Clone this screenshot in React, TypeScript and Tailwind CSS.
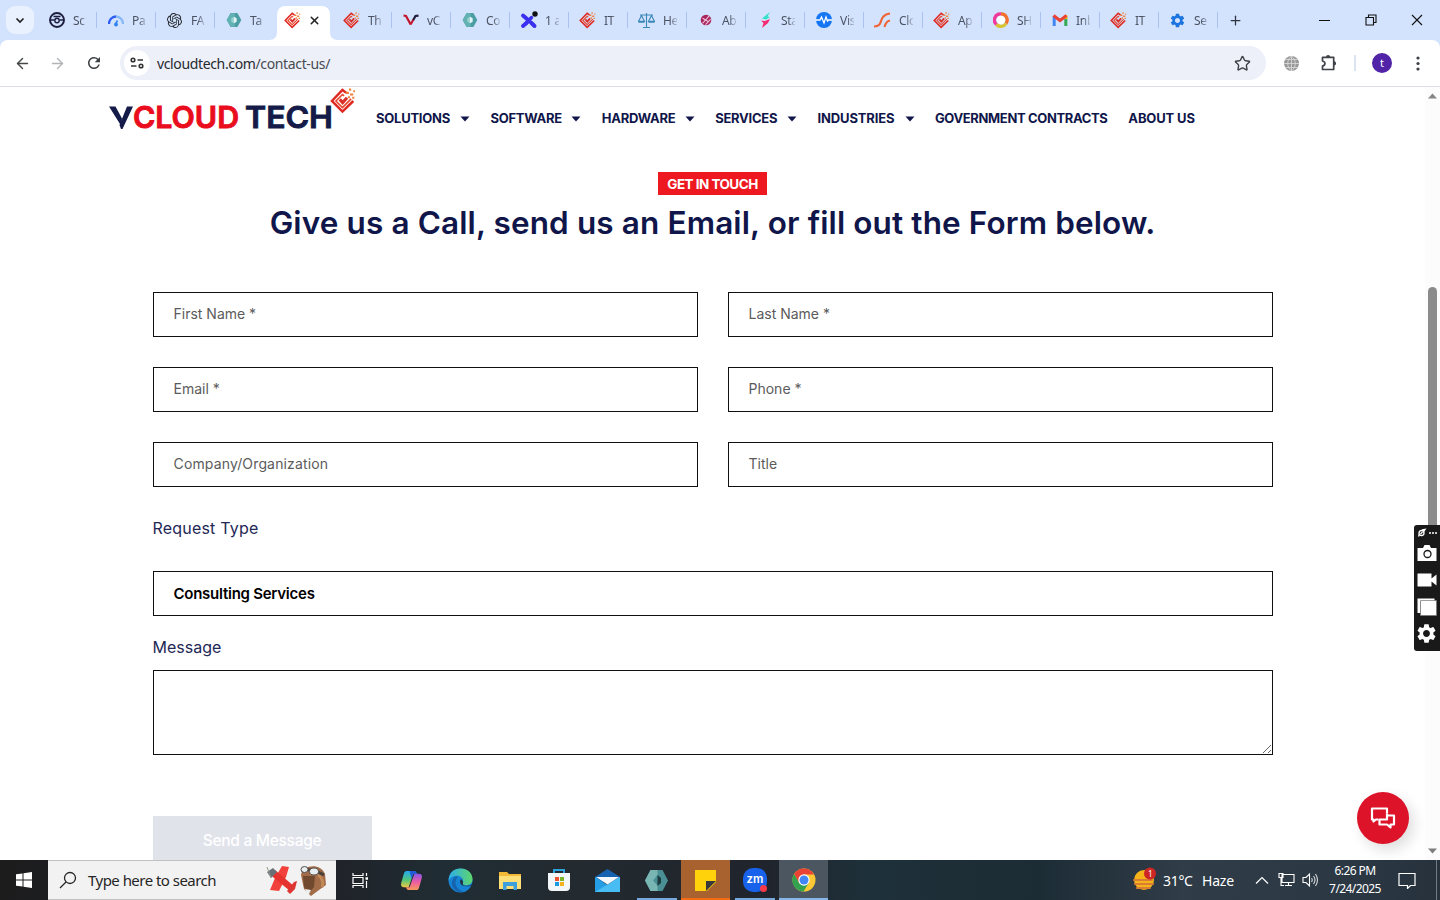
import React from "react";
import { ArrowLeft, ArrowRight, Star, X, Plus, Search } from "lucide-react";
import { SiOpenai } from "react-icons/si";
import { MdSettings, MdRefresh } from "react-icons/md";

const Mark = ({ s = 18 }: { s?: number }) => (
  <svg width={s} height={s} viewBox="0 0 24 24" fill="none" className="shrink-0">
    <path d="M15 4.500 11.500 1.800 1.800 12 11.500 21.800 21.500 12" stroke="#df2a24" strokeWidth="2.300" />
    <path d="M13 7.300 11.500 6 5.500 12 11.500 18 19.500 10" stroke="#e9452c" strokeWidth="1.500" />
    <path d="m9 10.500 2.700 3 4-4.500" stroke="#d9302a" strokeWidth="2.800" />
    <path d="M14.500 4.500h3M17.500 1.500h2M18.500 6h3M16.500 8.500h2M20.500 9h2M21.500 3h1.500" stroke="#f0813c" strokeWidth="2" />
  </svg>
);

const Hexagon = ({ s = 16 }: { s?: number }) => (
  <svg width={s} height={s} viewBox="0 0 24 24">
    <path d="M7 1.500h10l6 10.500-6 10.500H7L1 12Z" fill="#4b9da4" />
    <path d="M7 1.500h6v21H7L1 12Z" fill="#62b2b4" />
    <path d="m12 7 4 2.500v5L12 17Z" fill="#e3f5f4" />
    <path d="m12 7-4 2.500v5L12 17Z" fill="#9bd3d2" />
  </svg>
);

const icons: Record<string, React.ReactNode> = {
  scan: (
    <svg width="16" height="16" viewBox="0 0 16 16" fill="none" stroke="#1c1d3f">
      <circle cx="8" cy="8" r="7" strokeWidth="1.900" />
      <circle cx="8" cy="8.500" r="2.200" strokeWidth="1.400" />
      <path d="M2 8h3.500M10.500 8H14M4.500 4.500h7" strokeWidth="1.400" />
    </svg>
  ),
  gauge: (
    <svg width="16" height="16" viewBox="0 0 16 16" fill="none" strokeWidth="2.300">
      <path d="M1 12a7.200 7.200 0 0 1 7-7.500" stroke="#2f5ff2" />
      <path d="M8 4.500a7.200 7.200 0 0 1 7 7.500" stroke="#86b9f9" />
      <path d="m7.500 12 2-3.500" stroke="#2f83f6" strokeWidth="1.600" />
      <circle cx="8" cy="12.500" r="1.900" fill="#2f83f6" />
    </svg>
  ),
  ai: <SiOpenai size={15} color="#25292e" />,
  hex: <Hexagon />,
  mark: <Mark s={17} />,
  vee: (
    <svg width="16" height="16" viewBox="0 0 16 16" fill="none" strokeWidth="2.200">
      <path d="M.5 3.500 3 4l4.700 8.500" stroke="#c3152b" />
      <path d="m7.500 12.500 3-5" stroke="#c3152b" />
      <path d="m10.200 8 2.300-4 3-.3" stroke="#201b38" />
    </svg>
  ),
  ex: (
    <svg width="18" height="18" viewBox="0 0 18 18" fill="none" strokeLinecap="round" className="shrink-0">
      <path d="m3 4.500 4 3.500M3 15l4-3.500M11.500 12l3 3" stroke="#3a30ee" strokeWidth="3.900" />
      <path d="m6 7 6 5.500M6 12.500l5.500-6" stroke="#3a30ee" strokeWidth="3.400" />
      <circle cx="15" cy="3" r="2.700" fill="#111" />
    </svg>
  ),
  scale: (
    <svg width="17" height="17" viewBox="0 0 17 17" fill="none" stroke="#3a88b8" strokeWidth="1.100" className="shrink-0">
      <path d="M8.500 1v14M2 3h13M5 15.500h7M3.500 3.500l-3 6h6Zm10 0-3 6h6Z" />
      <path d="M.5 9.700h6M10.500 9.700h6" strokeWidth="2" />
    </svg>
  ),
  globe: (
    <svg width="12" height="12" viewBox="0 0 14 14">
      <circle cx="7" cy="7" r="6.200" fill="#a9265c" />
      <path d="m3 11 8-9M6.500 12.500l6-6.500M3 5l7 4" stroke="#efc4dd" strokeWidth="1.200" />
    </svg>
  ),
  bolt: (
    <svg width="16" height="16" viewBox="0 0 16 16">
      <path d="M13 0 5 6.500 9 7.500 13 5 10.500 4.500Z" fill="#31e1c7" />
      <path d="M4 8.500 8 9 13 7l-2 4-6 5 1.500-5Z" fill="#f52a70" />
    </svg>
  ),
  pulse: (
    <svg width="16" height="16" viewBox="0 0 16 16">
      <circle cx="8" cy="8" r="8" fill="#1476f2" />
      <path d="M0 8h4l1.500-3L8 11l2-6 1.500 4 1-1H16" fill="none" stroke="#fff" strokeWidth="1.300" />
    </svg>
  ),
  swoosh: (
    <svg width="17" height="17" viewBox="0 0 17 17" fill="none" stroke="#ef6335" strokeWidth="2.100" className="shrink-0">
      <path d="M0 14.500c8 0 6-6.500 9-9.500 2-2.500 3.500-3 7-3.500M10.500 15c1-4 2.500-6 5.500-6.500" />
    </svg>
  ),
  ring: (
    <svg width="16" height="16" viewBox="0 0 16 16" fill="none" strokeWidth="3.300">
      <path d="M3.500 12.500A6 6 0 0 1 8 2" stroke="#ee3a9b" />
      <path d="M8 2a6 6 0 0 1 5 9.500" stroke="#f3702f" />
      <path d="M13 11.500a6 6 0 0 1-9.500 1" stroke="#d8c431" />
      <circle cx="8" cy="8" r="4.200" fill="#fff" stroke="none" />
    </svg>
  ),
  mail: (
    <svg width="16" height="16" viewBox="0 0 16 16" fill="none" strokeWidth="3">
      <path d="M2.200 4v10" stroke="#4285f4" />
      <path d="M13.800 5v9" stroke="#34a853" />
      <path d="M13.800 3v4" stroke="#fbbc04" />
      <path d="M1.500 3.500 8 8.500l6.500-5" stroke="#ea4335" />
    </svg>
  ),
  gear: <MdSettings size={17} color="#1b74df" className="shrink-0" />,
};

const tabs: [string, string][] = [
  ["scan", "Sc"], ["gauge", "Pa"], ["ai", "FA"], ["hex", "Ta"], ["active", ""], ["mark", "Th"],
  ["vee", "vC"], ["hex", "Co"], ["ex", "1 a"], ["mark", "IT"], ["scale", "He"], ["globe", "Ab"],
  ["bolt", "Sta"], ["pulse", "Vis"], ["swoosh", "Clo"], ["mark", "Ap"], ["ring", "SH"],
  ["mail", "Inb"], ["mark", "IT"], ["gear", "Se"],
];

function TabStrip() {
  return (
    <div className="flex h-10 shrink-0 items-center bg-[#d3e2fd]">
      <div className="ml-1.5 mr-[5px] flex h-7 w-7 shrink-0 items-center justify-center rounded-[9px] bg-[#eaf1fe]">
        <svg width="10" height="7" viewBox="0 0 10 7" fill="none" stroke="#222" strokeWidth="1.700"><path d="m1.500 1.500 3.500 3.500 3.500-3.500" /></svg>
      </div>
      {tabs.map(([icon, label], i) =>
        icon === "active" ? (
          <div key={i} className="relative flex h-full w-[59px] shrink-0 items-end">
            <svg width="59" height="34" viewBox="0 0 59 34" className="absolute bottom-0 left-0 overflow-visible" fill="#fff">
              <path d="M-6 34Q2 34 2 26V9Q2 0 11 0H46Q55 0 55 9V26Q55 34 63 34Z" />
            </svg>
            <div className="relative flex h-[34px] w-full items-center pb-1.5 pl-[9px]">
              <Mark s={17} />
              <X size={13} strokeWidth={2.800} color="#222" className="ml-[7px]" />
            </div>
          </div>
        ) : (
          <div key={i} className="flex h-10 w-[59px] shrink-0 items-center pl-[9px]">
            <div className="flex w-[17px] shrink-0 items-center justify-center">{icons[icon]}</div>
            <div className="ml-[8px] w-[14px] overflow-hidden whitespace-nowrap pt-px text-[12px] leading-4 tracking-[-0.300px] text-[#4b5362] [mask-image:linear-gradient(to_right,#000_50%,#0003)]">{label}</div>
            <div className={i === 3 ? "hidden" : "ml-auto mr-px h-4 w-px bg-[#a9c2ef]"} />
          </div>
        ),
      )}
      <Plus size={15} strokeWidth={2} color="#303440" className="ml-[9px] shrink-0" />
      <svg width="11" height="11" viewBox="0 0 11 11" stroke="#111" className="ml-auto shrink-0"><path d="M0 5.500h11" /></svg>
      <svg width="12" height="12" viewBox="0 0 12 12" fill="none" stroke="#111" strokeWidth="1.100" className="ml-[35px] shrink-0">
        <path d="M1 3.500h7.500V11H1ZM3.500 3.500V1H11v7.500H8.500" />
      </svg>
      <svg width="12" height="12" viewBox="0 0 12 12" stroke="#111" strokeWidth="1.100" className="ml-[34px] mr-[17px] shrink-0"><path d="m1 1 10 10M11 1 1 11" /></svg>
    </div>
  );
}

function Toolbar() {
  return (
    <div className="flex h-[47px] shrink-0 items-center rounded-t-[8px] border-b border-[#dcdfe3] bg-white">
      <ArrowLeft size={17} strokeWidth={2} color="#444746" className="ml-[14px]" />
      <ArrowRight size={17} strokeWidth={2} color="#b2b4b6" className="ml-[18px]" />
      <MdRefresh size={18} color="#3d4043" className="ml-[19px]" />
      <div className="ml-[17px] flex h-[34px] w-[1146px] items-center rounded-full bg-[#edf0f9] pl-[4px]">
        <div className="flex h-[26px] w-[26px] items-center justify-center rounded-full bg-white">
          <svg width="14" height="12" viewBox="0 0 14 12" fill="none" stroke="#333" strokeWidth="1.600">
            <circle cx="3" cy="3" r="1.800" /><path d="M7.500 3H13M1 9h5.500" /><circle cx="11" cy="9" r="1.800" />
          </svg>
        </div>
        <span className="ml-[7px] text-[14px] tracking-[-0.360px] text-[#27292d]">vcloudtech.com<span className="text-[#474b52]">/contact-us/</span></span>
        <Star size={17} strokeWidth={2} color="#3f4247" className="ml-auto mr-[15px]" />
      </div>
      <svg width="17" height="17" viewBox="0 0 17 17" className="ml-[17px]">
        <circle cx="8.500" cy="8.500" r="7.500" fill="#999" />
        <path d="M1 8.500h15M2.500 4.500h12M2.500 12.500h12M8.500 1v15M8.500 1c-5 4-5 11 0 15M8.500 1c5 4 5 11 0 15" fill="none" stroke="#dedede" strokeWidth=".8" />
      </svg>
      <svg width="18" height="18" viewBox="0 0 18 18" className="ml-[20px]">
        <path d="M2.500 3.300h11.200v12.200H2.500V12q2.400-.5 2.400-2.500T2.500 7Z" fill="none" stroke="#3f4247" strokeWidth="1.700" strokeLinejoin="round" />
        <path d="M6 3a2 2 0 0 1 4.200 0ZM14 7.300a2 2 0 0 1 0 4.200Z" fill="#3f4247" />
      </svg>
      <div className="ml-[16px] h-4 w-0.5 bg-[#dce3f2]" />
      <div className="ml-[16px] flex h-5 w-5 items-center justify-center rounded-full bg-[#5123a7] text-[11px] text-white">t</div>
      <svg width="4" height="15" viewBox="0 0 4 15" className="ml-[24px]" fill="#3c3f43"><circle cx="2" cy="2" r="1.600" /><circle cx="2" cy="7.500" r="1.600" /><circle cx="2" cy="13" r="1.600" /></svg>
    </div>
  );
}

const nav = [
  { t: "SOLUTIONS", w: "w-[94px]", c: true }, { t: "SOFTWARE", w: "w-[91px]", c: true },
  { t: "HARDWARE", w: "w-[93px]", c: true }, { t: "SERVICES", w: "w-[82px]", c: true },
  { t: "INDUSTRIES", w: "w-[97px] tracking-[-0.150px]", c: true }, { t: "GOVERNMENT CONTRACTS", w: "w-[173px] tracking-[-0.360px]", c: false },
  { t: "ABOUT US", w: "w-[67px] tracking-[-0.150px]", c: false },
];

function SiteHeader() {
  return (
    <div className="flex h-[63px] items-center pl-[108px]">
      <svg width="248" height="63" viewBox="0 0 248 63" className="shrink-0 font-['Inter'] font-semibold" fontSize="30">
        <path d="M1 19.500h6.500L14 31.500 12 37ZM19 19.500h6L14.500 42h-1.500l-1.500-4Z" fill="#151b49" />
        <text x="25" y="41" fill="#e90d1d" stroke="#e90d1d" strokeWidth=".9" textLength="106" lengthAdjust="spacingAndGlyphs">CLOUD</text>
        <text x="137" y="41" fill="#151b49" stroke="#151b49" strokeWidth=".9" textLength="88" lengthAdjust="spacingAndGlyphs">TECH</text>
        <svg x="222" y="1" width="26" height="26"><Mark s={26} /></svg>
      </svg>
      <div className="ml-[20px] flex gap-[20.400px] font-['Inter'] text-[13px] font-bold tracking-[-0.250px] text-[#10164a]">
        {nav.map((n) => (
          <div key={n.t} className={`flex shrink-0 items-center justify-between whitespace-nowrap ${n.w}`}>
            {n.t}
            {n.c && <svg width="10" height="6" viewBox="0 0 10 6" fill="#10164a"><path d="M.5.500h9L5 5.500Z" /></svg>}
          </div>
        ))}
      </div>
    </div>
  );
}

const Field = ({ label }: { label: string }) => (
  <div className={`flex h-[45px] items-center border border-[#101010] pb-[2px] pl-5 text-[14px] text-[#5b5b5b] ${label.startsWith("Company") ? "tracking-[0.150px]" : ""}`}>{label}</div>
);

function ContactForm() {
  return (
    <div className="flex flex-col items-center font-['Inter']">
      <div className="mt-[22px] flex h-[23px] w-[109px] shrink-0 items-center justify-center whitespace-nowrap bg-[#ed1820] pt-px text-[13.500px] font-bold tracking-[-0.530px] text-white">GET IN TOUCH</div>
      <h1 className="mt-[8px] whitespace-nowrap text-[31.500px] font-semibold leading-[40px] tracking-[0.120px] text-[#10164a]">Give us a Call, send us an Email, or fill out the Form below.</h1>
      <div className="mt-[49px] w-[1120px]">
        <div className="grid grid-cols-2 gap-[30px]">
          {["First Name *", "Last Name *", "Email *", "Phone *", "Company/Organization", "Title"].map((l) => <Field key={l} label={l} />)}
        </div>
        <div className="mt-[29px] h-6 text-[16px] leading-6 tracking-[0.200px] text-[#232855]">Request Type</div>
        <div className="mt-[31px] flex h-[45px] items-center border border-[#101010] pl-5 pt-px text-[15px] font-semibold tracking-[-0.250px] text-black">Consulting Services</div>
        <div className="mt-[19px] h-6 text-[16px] leading-6 text-[#232855]">Message</div>
        <div className="mt-[11px] flex h-[85px] items-end justify-end border border-[#101010]">
          <svg width="10" height="10" viewBox="0 0 10 10" stroke="#666"><path d="m1 9 8-8M6 9l3-3" /></svg>
        </div>
        <div className="mt-[61px] flex h-[48px] w-[219px] items-center justify-center bg-[#e1e3eb] pt-px text-[15.500px] font-medium tracking-[-0.280px] text-white">Send a Message</div>
      </div>
    </div>
  );
}

function CaptureWidget() {
  return (
    <div className="absolute right-0 top-[438px] flex h-[126px] w-[26px] flex-col items-center rounded-l-[3px] bg-[#191919] pr-px text-white">
      <svg width="22" height="10" viewBox="0 0 22 10" className="mt-[3px] shrink-0" fill="none" stroke="#fff">
        <circle cx="5.500" cy="5" r="2.500" strokeWidth="1.300" /><path d="M2.500 8.500 3.500 6M7.500 3.500l1.500-2L6 2M4.500 6l2-2" strokeWidth="1.300" />
        <path d="M13 5h2m1 0h2m1 0h2" strokeWidth="1.700" />
      </svg>
      <svg width="20" height="16" viewBox="0 0 20 16" className="mt-[7px] shrink-0"><path d="M.5 3H6l1.500-3h5L14 3h5.500v13H.5Z" fill="#fff" /><circle cx="10.500" cy="9" r="3.500" fill="none" stroke="#191919" strokeWidth="1.300" /></svg>
      <svg width="20" height="14" viewBox="0 0 20 14" className="mt-[12px] shrink-0" fill="#fff"><path d="M.5.500h14v5l5-4v11l-5-4v5H.500Z" /></svg>
      <svg width="20" height="18" viewBox="0 0 20 18" className="mt-[11px] shrink-0" fill="#fff"><path d="M.5.500h17V3h-14v12h-3Z" /><path d="M3.500 2.500h16v15h-16Z" stroke="#777" strokeWidth=".7" /></svg>
      <MdSettings size={23} className="mt-[6px] shrink-0" />
    </div>
  );
}

const Slot = ({ children, cls = "", line = "" }: { children: React.ReactNode; cls?: string; line?: string }) => (
  <div className={`flex h-10 w-[49px] shrink-0 flex-col items-center ${cls}`}>
    <div className="flex h-[38px] items-center pt-[2px]">{children}</div>
    <div className={`h-[2px] ${line}`} />
  </div>
);

function Taskbar() {
  return (
    <div className="flex h-10 shrink-0 items-center bg-[linear-gradient(90deg,#1c1c1d_0%,#20232a_24%,#202d34_31%,#232a30_40%,#20242c_53%,#1e3039_60%,#1c2c35_72%,#303c47_82%,#2b3844_94%,#26313b_100%)] text-white">
      <div className="flex w-12 shrink-0 justify-center">
        <svg width="16" height="16" viewBox="0 0 16 16" fill="#fff"><path d="m0 2.300 6.500-.9v6H0ZM7.500 1.300 16 0v7.400H7.500ZM0 8.500h6.500v6L0 13.700ZM7.500 8.500H16V16l-8.500-1.300Z" /></svg>
      </div>
      <div className="flex h-10 w-[288px] shrink-0 items-center border-y border-[#bfc1c3] bg-[#f2f2f2] text-[#262626]">
        <svg width="18" height="18" viewBox="0 0 18 18" fill="none" stroke="#262626" strokeWidth="1.300" className="ml-[11px]"><circle cx="11" cy="7" r="5.500" /><path d="m7 11-6 6" /></svg>
        <span className="ml-[11px] whitespace-nowrap text-[15px] tracking-[-0.530px]">Type here to search</span>
        <svg width="62" height="34" viewBox="0 0 62 34" className="ml-auto mr-[9px]">
          <path d="M17 3 24 4 21 14 14 28 5 27 10 15Z" fill="#f2403a" />
          <path d="m3 10 7-3 20 17-2 3-3 1Z" fill="#e5322e" />
          <path d="m22 28 7-9 3-1-2 8-5 5Z" fill="#dc3532" />
          <path d="m2 9 6-4 4 4-6 6Z" fill="#697078" />
          <path d="M2 4 6 15" stroke="#998" />
          <path d="M36 12c2-11 20-12 24-1l1 11-7 5-8 6-7-7Z" fill="#a26c48" />
          <path d="M38 13h12l-1 11-5 6-5-6Z" fill="#70492f" />
          <path d="M53 12c4 2 6 8 4 12" fill="none" stroke="#c28a56" strokeWidth="3" />
          <path d="M37 9c4-4 13-2 22 3" fill="none" stroke="#48413c" strokeWidth="3" />
          <ellipse cx="39.500" cy="6.500" rx="3.500" ry="3" fill="#e5edef" stroke="#57504d" /><ellipse cx="49" cy="8.500" rx="4.500" ry="3.500" fill="#e5edef" stroke="#57504d" />
          <path d="m40 26 6 1-3 6Z" fill="#eee" />
        </svg>
      </div>
      <Slot cls="mr-[2px]">
        <svg width="17" height="17" viewBox="0 0 17 17" fill="none" stroke="#fff" strokeWidth="1.200"><path d="M1 1v2.500h10V1M1 5.500h10v6H1ZM1 16v-2.500h10V16M14.500 1v3M14.500 9v7" /><path d="M13.500 6.500h2.500" strokeWidth="2.500" /></svg>
      </Slot>
      <Slot>
        <svg width="23" height="23" viewBox="0 0 24 24">
          <defs><linearGradient id="cpa" x2="0" y2="1"><stop stopColor="#22a7f2" /><stop offset=".55" stopColor="#50c67a" /><stop offset="1" stopColor="#f1c744" /></linearGradient><linearGradient id="cpb" x2="0" y2="1"><stop stopColor="#8a55e8" /><stop offset=".5" stopColor="#ed5ca4" /><stop offset="1" stopColor="#f69a58" /></linearGradient></defs>
          <path d="M7 2h8c2 0 2 3 4 3h-5L9 19H4c-4 0-3-4-2-7L4 5c.5-2 1.500-3 3-3Z" fill="url(#cpa)" />
          <path d="M17 22H9c-2 0-2-3-4-3h5l5-14h5c4 0 3 4 2 7l-2 7c-.5 2-1.500 3-3 3Z" fill="url(#cpb)" />
          <path d="M10 2h5c2 0 2 3 4 3h-5l-2 5Z" fill="#2357d9" />
        </svg>
      </Slot>
      <Slot>
        <svg width="25" height="25" viewBox="0 0 24 24">
          <defs><linearGradient id="ed"><stop stopColor="#2daee9" /><stop offset="1" stopColor="#5fd66c" /></linearGradient></defs>
          <circle cx="12" cy="12" r="11.500" fill="#1683d5" />
          <path d="M.7 10C2 3 7 .5 12 .5c8 0 12 6 11.500 11-.5 4-4 5-7 5-4 0-2-2-2-4 0-3-3-5-6-5-3.500 0-6.500 1.500-7.800 4.500Z" fill="url(#ed)" />
          <path d="M8.500 10c-3 4-1 10 6.500 13-4 1-9-1-11-6-1-5 2-9 5-9Z" fill="#1764ae" />
          <path d="M12.500 10.500c-3 4 1 8.500 10 6.500l1 1v-3c-2 2-5 2.500-7.500 1.800-2.500-.8-1.500-2-1.500-3.800Z" fill="#203449" />
        </svg>
      </Slot>
      <Slot>
        <svg width="22" height="21" viewBox="0 0 22 21"><path d="M0 2h8l2 2h12v15H0Z" fill="#f4ba37" /><path d="M0 6h22v13H0Z" fill="#ffdf78" /><path d="M4 12h14v8h-3.500v-4h-7v4H4Z" fill="#3e9fdd" /></svg>
      </Slot>
      <Slot>
        <svg width="24" height="24" viewBox="0 0 24 24"><path d="M7 7V2h10v5" fill="none" stroke="#2ea2dd" strokeWidth="2" /><path d="M1 5h22v14q0 4-4 4H5q-4 0-4-4Z" fill="#f4f7f9" /><path d="M8 9h4v4H8Z" fill="#ef5030" /><path d="M13 9h4v4h-4Z" fill="#7bb52c" /><path d="M8 14h4v4H8Z" fill="#1a98e0" /><path d="M13 14h4v4h-4Z" fill="#f3b31d" /></svg>
      </Slot>
      <Slot>
        <svg width="25" height="23" viewBox="0 0 25 23"><path d="M0 8 12.500 0 25 8v5H0Z" fill="#1563b0" /><path d="M0 8 12.500 16 25 8v15H0Z" fill="#249fe5" /><path d="m0 23 25-15v15Z" fill="#48bdf3" /><path d="M1 8h23l-11.500 7.500Z" fill="#f3f8fd" /></svg>
      </Slot>
      <Slot line="w-10 bg-[#78a9db]">
        <svg width="23" height="21" viewBox="0 0 23 21"><path d="M5.500 0h12L23 10.500 17.500 21h-12L0 10.500Z" fill="#4a8f94" /><path d="M5.500 0h7v5L8 10.500l4.500 5V21h-7L0 10.500Z" fill="#78b5b3" /><path d="M12.500 5 16 8v5l-3.500 3Z" fill="#1c3b3e" /></svg>
      </Slot>
      <Slot cls="bg-[#a7622f]" line="w-full bg-[#f36b14]">
        <svg width="23" height="23" viewBox="0 0 23 23"><path d="M1 1h21v12l-9 9H1Z" fill="#ffd20b" /><path d="M12 12h10L12 22Z" fill="#37393b" /></svg>
      </Slot>
      <Slot line="w-10 bg-[#78a9db]">
        <svg width="26" height="26" viewBox="0 0 26 26"><rect x="1" y="1" width="24" height="24" rx="10" fill="#1861ea" /><text x="13" y="16" textAnchor="middle" fill="#fff" className="font-['Inter'] font-semibold" fontSize="11.500">zm</text><circle cx="21.500" cy="21.500" r="3.500" fill="#f73948" /></svg>
      </Slot>
      <Slot cls="bg-[#4c5661]" line="w-full bg-[#86b7e8]">
        <svg width="24" height="24" viewBox="0 0 24 24"><circle cx="12" cy="12" r="11.500" fill="#fcc934" /><path d="M12 6.500H22A11.500 11.500 0 0 0 2 6l5 9Z" fill="#e94335" /><path d="M2 6a11.500 11.500 0 0 0 9.500 17.500L17 14.500l-9.500 1Z" fill="#34a14e" /><circle cx="12" cy="12" r="5.700" fill="#fff" /><circle cx="12" cy="12" r="4.500" fill="#4285f4" /></svg>
      </Slot>
      <div className="ml-auto flex h-10 w-[309px] shrink-0 items-center">
        <svg width="26" height="26" viewBox="0 0 26 26"><circle cx="13" cy="13" r="10" fill="#f5b51a" /><path d="M3 13h18M4 17h18M6 21h13" stroke="#d97c34" strokeWidth="2" strokeLinecap="round" /><circle cx="19" cy="6.500" r="6" fill="#cc2725" /><text x="17" y="9.500" fill="#fff" fontSize="8">1</text></svg>
        <span className="ml-[6px] w-[39px] whitespace-nowrap text-[14px] tracking-[-0.300px]">31°C</span>
        <span className="w-[53px] text-[14px] tracking-[-0.200px]">Haze</span>
        <svg width="14" height="9" viewBox="0 0 14 9" fill="none" stroke="#fff" strokeWidth="1.200"><path d="m1 7.500 6-6 6 6" /></svg>
        <svg width="18" height="16" viewBox="0 0 18 16" className="ml-[9px]" fill="none" stroke="#fff" strokeWidth="1.100"><path d="M4 2.500h12v8H4ZM7 13.500h7M10.500 10.500v3M1 1.500h4v4H1ZM3 5.500v8h3" /></svg>
        <svg width="17" height="16" viewBox="0 0 17 16" className="ml-[6px]" fill="none" stroke="#fff" strokeWidth="1.100"><path d="M1 5.500h3l3.500-3.500v12L4 10.500H1Z" /><path d="M9.500 6q1.500 2 0 4M11.500 4q3 4 0 8M13.500 2q4 6 0 12" opacity=".8" /></svg>
        <div className="ml-[9px] flex w-[54px] flex-col items-center whitespace-nowrap text-[12px] leading-[18px] tracking-[-0.580px]"><span>6:26 PM</span><span>7/24/2025</span></div>
        <svg width="18" height="17" viewBox="0 0 18 17" className="ml-[16px]" fill="none" stroke="#fff" strokeWidth="1.200"><path d="M1 1.500h16v12h-4.500l-3 3v-3H1Z" /></svg>
        <div className="ml-auto mr-[3px] h-10 w-px bg-[#717b84]" />
      </div>
    </div>
  );
}

export default function App() {
  return (
    <div className="flex h-[900px] w-[1440px] flex-col overflow-hidden bg-white font-['Noto_Sans',sans-serif]">
      <TabStrip />
      <div className="shrink-0 bg-[#d3e2fd]"><Toolbar /></div>
      <div className="relative flex min-h-0 flex-1">
        <div className="w-[1425px] shrink-0 overflow-hidden"><SiteHeader /><ContactForm /></div>
        <div className="flex w-[15px] flex-col items-center bg-[#fcfcfc] py-[6px]">
          <svg width="9" height="6" viewBox="0 0 9 6" fill="#858585"><path d="M0 5.500 4.500.500 9 5.500Z" /></svg>
          <div className="mt-[188px] h-[330px] w-[9px] rounded-full bg-[#8b8b8b]" />
          <svg width="9" height="6" viewBox="0 0 9 6" className="mt-auto" fill="#7d7d7d"><path d="M0 .5h9L4.500 5.500Z" /></svg>
        </div>
        <CaptureWidget />
        <div className="absolute right-[31px] top-[705px] flex h-[52px] w-[52px] items-center justify-center rounded-full bg-[#dc1329] shadow-[5px_6px_14px_#0002]">
          <svg width="26" height="24" viewBox="0 0 26 24" fill="none" stroke="#fff" strokeWidth="2.200" strokeLinejoin="round"><path d="M8.500 13.500H6l-2.500 2v-2H2v-11h15v5" /><path d="M17 7.500V9.500H24v9h-3.500v3L17 18.500H9.500v-5H17v-4" /></svg>
        </div>
      </div>
      <Taskbar />
    </div>
  );
}
